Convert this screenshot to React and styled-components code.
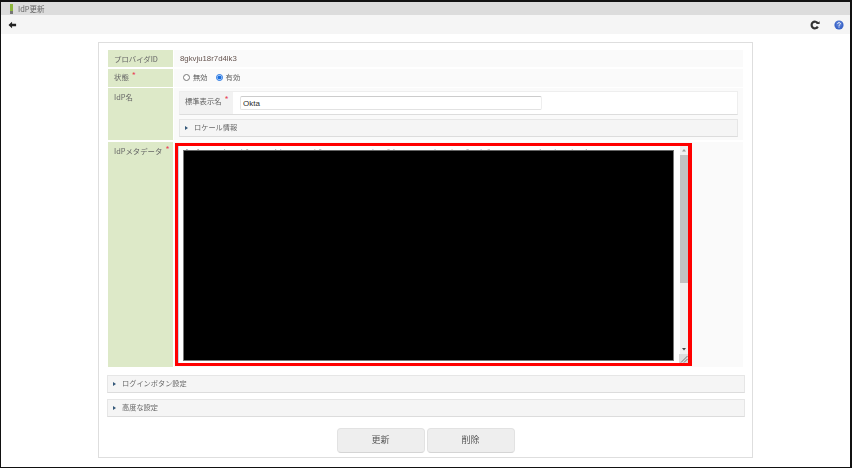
import React from "react";
import styled, { createGlobalStyle } from "styled-components";

const Global = createGlobalStyle`
  html, body { margin: 0; padding: 0; background: #fff; }
  body { font-family: "Noto Sans CJK JP", "Liberation Sans", sans-serif; }
`;
const Frame = styled.div`
  box-sizing: border-box;
  width: 852px;
  height: 468px;
  border: 1px solid #111;
  border-top-width: 2px;
  border-right-width: 2px;
  display: flex;
  flex-direction: column;
  background: #fff;
  overflow: hidden;
`;
const Soft = styled.span`
  display: inline-block;
  filter: blur(0.2px);
  white-space: nowrap;
`;
const TitleBar = styled.div`
  height: 13px;
  flex: none;
  background: #dcdcdc;
  display: flex;
  align-items: center;
  padding-left: 9px;
  gap: 5px;
  font-size: 7.5px;
  line-height: 10px;
  color: #666;
`;
const Logo = styled.span`
  width: 3px;
  height: 10px;
  background: linear-gradient(#8db63c 0 68%, #777 68% 100%);
`;
const ToolBar = styled.div`
  height: 19px;
  flex: none;
  background: #f5f5f5;
  display: flex;
  align-items: center;
  padding: 0 6px 0 7px;
`;
const ToolSpacer = styled.span`
  flex: 1;
`;
const ToolIcon = styled.svg`
  display: block;
  width: ${(p) => p.$w || 10}px;
  height: 10px;
  margin-left: ${(p) => p.$ml || 0}px;
`;
const Card = styled.main`
  box-sizing: border-box;
  width: 655px;
  height: 416px;
  margin: 8px 0 0 97px;
  border: 1px solid #dedede;
  padding: 7px 9px 0;
  display: flex;
  flex-direction: column;
`;
const Row = styled.div`
  display: grid;
  grid-template-columns: 65px 1fr;
  column-gap: 1px;
  height: ${(p) => p.$h}px;
  margin-bottom: ${(p) => p.$mb ?? 2}px;
  flex: none;
`;
const Label = styled.div`
  background: #dde9c8;
  color: #666;
  font-size: 7.4px;
  line-height: 11px;
  padding: ${(p) => p.$pt ?? 3}px 0 0 6px;
  white-space: nowrap;
`;
const Req = styled.span`
  color: #e8485a;
  margin-left: 3px;
  font-size: 9px;
  position: relative;
  top: -1px;
`;
const Value = styled.div`
  background: #fafafa;
  color: #5f5f5f;
  font-size: 7.3px;
  line-height: 11px;
  min-width: 0;
  display: flex;
  padding: ${(p) => p.$pad || "0 0 0 6px"};
  flex-direction: ${(p) => (p.$col ? "column" : "row")};
  align-items: ${(p) => (p.$col ? "stretch" : "center")};
`;
const PlainValue = styled(Value)`
  font-family: "Liberation Sans", sans-serif;
  font-size: 7.8px;
  color: #65534e;
`;
const RadioRow = styled(Value)`
  padding: 0 0 2px 9px;
`;
const MetaValue = styled(Value)`
  padding: 0;
  align-items: flex-start;
`;
const RadioGroup = styled.label`
  display: inline-flex;
  align-items: center;
  gap: 3px;
  margin-right: 8px;
`;
const Radio = styled.input.attrs({ type: "radio" })`
  margin: 0;
  width: 7px;
  height: 7px;
  accent-color: #1a6fe0;
`;
const NameTable = styled.div`
  height: 22px;
  margin: 3px 5px 0;
  display: grid;
  grid-template-columns: 53px 1fr;
  border: 1px solid #eee;
  border-bottom-color: #ddd;
  background: #fff;
  flex: none;
`;
const NameLabel = styled.div`
  background: #f2f2f2;
  line-height: 11px;
  padding: 3px 0 0 5px;
  color: #5f5f5f;
  white-space: nowrap;
`;
const NameCell = styled.div`
  display: flex;
  align-items: center;
  padding-left: 7px;
`;
const NameInput = styled.input`
  box-sizing: border-box;
  width: 302px;
  height: 14px;
  border: 1px solid #e2e2e2;
  border-top-color: #ccc;
  border-right-color: #eee;
  border-radius: 2px;
  padding: 0 2px;
  font: 8px "Liberation Sans", sans-serif;
  color: #2b2b2b;
  outline: none;
`;
const Accordion = styled.div`
  box-sizing: border-box;
  height: 18px;
  background: #f5f5f5;
  border: 1px solid #e6e6e6;
  border-bottom-color: #dcdcdc;
  display: flex;
  align-items: center;
  gap: 6px;
  padding: 0 0 2px 5px;
  font-size: 7.2px;
  line-height: 10px;
  color: #6a6a6a;
  flex: none;
  margin: ${(p) => p.$m || "0"};
`;
const Caret = styled.span`
  width: 0;
  height: 0;
  margin-top: 2px;
  border-left: 3px solid #34587a;
  border-top: 2px solid transparent;
  border-bottom: 2px solid transparent;
`;
const Marked = styled.div`
  box-sizing: border-box;
  margin: 1px 0 0 1px;
  width: 517px;
  height: 223px;
  border: 3px solid #f00;
  border-right-width: 4px;
  background: #fff;
  display: flex;
`;
const Editor = styled.div`
  flex: 1;
  min-width: 0;
  border-left: 1px solid #c3d2e6;
  padding: 2px 6px 2px 4px;
  display: flex;
  flex-direction: column;
`;
const PeekLine = styled.svg`
  display: block;
  width: 100%;
  height: 2px;
  flex: none;
  opacity: 0.6;
`;
const Masked = styled.div`
  flex: 1;
  background: #000;
  border: 1px solid #777;
  border-top-color: #666;
`;
const Scroll = styled.div`
  width: 8px;
  background: #f0f0f0;
  display: flex;
  flex-direction: column;
  flex: none;
`;
const ScrollArrow = styled.svg`
  display: block;
  width: 8px;
  height: ${(p) => p.$h}px;
  flex: none;
`;
const Thumb = styled.div`
  height: 128px;
  flex: none;
  background: #c1c1c1;
`;
const ScrollRest = styled.div`
  flex: 1;
`;
const Grip = styled.svg`
  display: block;
  width: 9px;
  height: 9px;
  margin-left: -1px;
  flex: none;
`;
const Buttons = styled.div`
  display: flex;
  justify-content: center;
  gap: 2px;
  margin-top: 11px;
  flex: none;
`;
const Button = styled.button`
  box-sizing: border-box;
  width: 88px;
  height: 25px;
  background: #eee;
  border: 1px solid #e2e2e2;
  border-bottom-color: #d5d5d5;
  border-radius: 4px;
  font: 9px/11px "Noto Sans CJK JP", sans-serif;
  color: #555;
  padding: 0 0 2px;
`;

const ticks = [3, 4, 14, 15, 41, 58, 63, 64, 92, 97, 131, 136, 137, 189, 204, 205, 210, 251, 268, 283, 284, 297, 304, 305, 356, 371, 388, 402];

export default function App() {
  return (
    <Frame>
      <Global />
      <TitleBar>
        <Logo />
        <Soft>IdP更新</Soft>
      </TitleBar>
      <ToolBar>
        <ToolIcon viewBox="0 0 10 10" $w={9}>
          <path d="M0.5 5 L4.5 1.5 V3.6 H9 V6.4 H4.5 V8.5 Z" fill="#222" />
        </ToolIcon>
        <ToolSpacer />
        <ToolIcon viewBox="0 0 10 10" $w={10}>
          <path
            d="M7.8 6.6 A3.3 3.3 0 1 1 7.8 3.4"
            fill="none"
            stroke="#333"
            strokeWidth="2.2"
          />
          <path d="M6 4 H9.6 V1.2 Z" fill="#333" />
        </ToolIcon>
        <ToolIcon viewBox="0 0 10 10" $w={10} $ml={14}>
          <circle cx="5" cy="5" r="4.6" fill="#3d66c8" />
          <circle cx="5" cy="4" r="3" fill="#6c8fe0" opacity="0.5" />
          <path
            d="M3.6 3.8 C3.7 2.2 6.4 2.2 6.4 3.7 C6.4 4.7 5 4.6 5 5.8"
            fill="none"
            stroke="#fff"
            strokeWidth="1"
          />
          <rect x="4.5" y="6.6" width="1" height="1" fill="#fff" />
        </ToolIcon>
      </ToolBar>
      <Card>
        <Row $h={17}>
          <Label>
            <Soft>プロバイダID</Soft>
          </Label>
          <PlainValue>
            <Soft>8gkvju18r7d4lk3</Soft>
          </PlainValue>
        </Row>
        <Row $h={18} $mb={1}>
          <Label $pt={2}>
            <Soft>状態</Soft>
            <Req>*</Req>
          </Label>
          <RadioRow>
            <RadioGroup>
              <Radio name="st" />
              <Soft>無効</Soft>
            </RadioGroup>
            <RadioGroup>
              <Radio name="st" defaultChecked />
              <Soft>有効</Soft>
            </RadioGroup>
          </RadioRow>
        </Row>
        <Row $h={52}>
          <Label>
            <Soft>IdP名</Soft>
          </Label>
          <Value $col $pad="0">
            <NameTable>
              <NameLabel>
                <Soft>標準表示名</Soft>
                <Req>*</Req>
              </NameLabel>
              <NameCell>
                <NameInput defaultValue="Okta" />
              </NameCell>
            </NameTable>
            <Accordion $m="4px 5px 0">
              <Caret />
              <Soft>ロケール情報</Soft>
            </Accordion>
          </Value>
        </Row>
        <Row $h={225} $mb={8}>
          <Label>
            <Soft>IdPメタデータ</Soft>
            <Req>*</Req>
          </Label>
          <MetaValue>
            <Marked>
              <Editor>
                <PeekLine viewBox="0 0 490 2" preserveAspectRatio="none">
                  {ticks.map((x, i) => (
                    <rect
                      key={x}
                      x={x}
                      y="1"
                      width="1"
                      height="1"
                      fill={i % 4 === 1 ? "#7d93b8" : i % 4 === 2 ? "#b89a7d" : "#777"}
                    />
                  ))}
                </PeekLine>
                <Masked />
              </Editor>
              <Scroll>
                <ScrollArrow viewBox="0 0 8 9" $h={9}>
                  <path d="M4 3 L6 5.5 H2 Z" fill="#999" />
                </ScrollArrow>
                <Thumb />
                <ScrollRest />
                <ScrollArrow viewBox="0 0 8 9" $h={9}>
                  <path d="M2 3 H6 L4 5.5 Z" fill="#444" />
                </ScrollArrow>
                <Grip viewBox="0 0 9 9">
                  <rect width="9" height="9" fill="#dcdcdc" />
                  <path d="M2 8.5 L8.5 2 M5 8.5 L8.5 5" stroke="#777" strokeWidth="1" />
                </Grip>
              </Scroll>
            </Marked>
          </MetaValue>
        </Row>
        <Accordion $m="0 -2px 6px -1px">
          <Caret />
          <Soft>ログインボタン設定</Soft>
        </Accordion>
        <Accordion $m="0 -2px 0 -1px">
          <Caret />
          <Soft>高度な設定</Soft>
        </Accordion>
        <Buttons>
          <Button>
            <Soft>更新</Soft>
          </Button>
          <Button>
            <Soft>削除</Soft>
          </Button>
        </Buttons>
      </Card>
    </Frame>
  );
}
